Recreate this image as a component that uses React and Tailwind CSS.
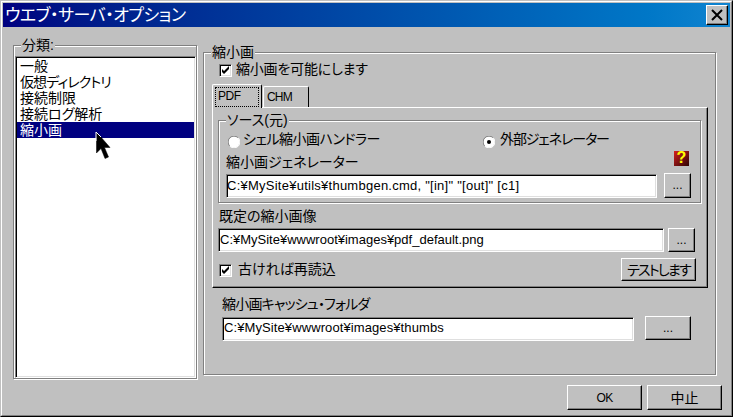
import React from "react";

const raised = "bg-[#c0c0c0] border border-white border-r-black border-b-black shadow-[inset_-1px_-1px_0_#808080]";
const etched = "relative border border-[#808080] shadow-[inset_1px_1px_0_#fff,1px_1px_0_#fff]";

function Btn({ className, children }) {
  return <div className={"flex items-center justify-center leading-none whitespace-nowrap text-black " + raised + " " + className}>{children}</div>;
}

function Dots() {
  return <span className="text-[12px] leading-none pb-[1px]">...</span>;
}

function Check({ className }) {
  return (
    <div className={"w-[13px] h-[13px] bg-white border border-[#808080] border-r-white border-b-white shadow-[inset_1px_1px_0_#000,inset_-1px_-1px_0_#dfdfdf] flex items-center justify-center shrink-0 " + (className || "")}>
      <svg width="9" height="9" viewBox="0 0 9 9"><path d="M1 3 L3 5 L8 0 V3 L3 8 L1 6 Z" fill="#000" /></svg>
    </div>
  );
}

function Radio({ on }) {
  return (
    <svg width="12" height="12" viewBox="0 0 12 12" className="shrink-0">
      <circle cx="6" cy="6" r="5.5" fill="#fff" />
      <path d="M1.8 10.2A5.9 5.9 0 0 1 10.2 1.8" fill="none" stroke="#808080" strokeWidth="1" />
      <path d="M10.2 1.8A5.9 5.9 0 0 1 1.8 10.2" fill="none" stroke="#fff" strokeWidth="1" />
      {on && <circle cx="6" cy="6" r="2" fill="#000" />}
    </svg>
  );
}

function Input({ className, children }) {
  return (
    <div className={"bg-white border border-[#808080] border-r-white border-b-white shadow-[inset_1px_1px_0_#000,inset_-1px_-1px_0_#dfdfdf] flex items-center text-[13px] leading-none text-black whitespace-nowrap " + className}>
      {children}
    </div>
  );
}

function Legend({ className, children }) {
  return <div className={"absolute bg-[#c0c0c0] px-px text-[14px] leading-[16px] text-black whitespace-nowrap " + className}>{children}</div>;
}

const items = [
  ["一般", ""],
  ["仮想ディレクトリ", "tracking-[-0.9px]"],
  ["接続制限", ""],
  ["接続ログ解析", ""],
  ["縮小画", ""],
];

export default function App() {
  return (
    <div className="relative w-[733px] h-[417px] overflow-hidden bg-[#c0c0c0] border border-[#c0c0c0] border-r-black border-b-black font-['Liberation_Sans','Noto_Sans_CJK_JP',sans-serif] [font-feature-settings:'palt']">
      <div className="h-full border border-white border-r-[#808080] border-b-[#808080] p-px flex flex-col">
        <div className="h-[24px] shrink-0 bg-gradient-to-r from-[#000080] to-[#1084d0] flex items-center justify-between pl-[2px] pr-[2px]">
          <span className="text-white text-[17px] leading-none tracking-[-0.5px]">ウエブ・サーバ・オプション</span>
          <div className={"w-[22px] h-[20px] flex items-center justify-center " + raised}>
            <svg width="12" height="12" viewBox="0 0 12 12"><path d="M1 1 L11 11 M11 1 L1 11" stroke="#000" strokeWidth="2" /></svg>
          </div>
        </div>

        <div className="flex items-start">
          <div className={etched + " w-[184px] h-[334px] ml-[10px] mt-[18px] pl-[1px] pt-[10px] shrink-0"}>
            <Legend className="left-[7px] -top-[9px]">分類:</Legend>
            <div className="h-full bg-white border border-[#808080] border-r-white border-b-white shadow-[inset_1px_1px_0_#000,inset_-1px_-1px_0_#dfdfdf] pt-[1px] pl-px pr-px">
              {items.map(([t, c], i) => (
                <div key={t} className={"h-[16px] pl-[3px] text-[14px] leading-[16px] " + c + " " + (i === 4 ? "bg-[#000080] text-white" : "text-black")}>{t}</div>
              ))}
            </div>
          </div>

          <div className={etched + " w-[513px] h-[323px] ml-[6px] mt-[25px] shrink-0"}>
            <Legend className="left-[7px] -top-[9px]">縮小画</Legend>
            <div className="flex items-center h-[13px] mt-[11px] ml-[15px] gap-[4px]">
              <Check />
              <span className="text-[14px] leading-none text-black pb-[4px] tracking-[-0.2px]">縮小画を可能にします</span>
            </div>

            <div className="flex items-end h-[24px] mt-[6px] ml-[8px] relative z-10">
              <div className="w-[50px] h-[24px] -mb-px bg-[#c0c0c0] border border-white border-b-0 border-r-black rounded-t-[2px] p-[2px] pb-[1px]">
                <div className="h-full border border-dotted border-black flex items-center pl-[2px] pb-[3px] text-[12px] tracking-[-0.5px] leading-none text-black">PDF</div>
              </div>
              <div className="w-[46px] h-[21px] ml-px bg-[#c0c0c0] border border-white border-b-0 border-r-black rounded-t-[2px] flex items-center pl-[3px] text-[12px] tracking-[-0.8px] leading-none text-black">CHM</div>
            </div>

            <div className="w-[496px] h-[181px] ml-[8px] border border-white border-r-black border-b-black shadow-[inset_-1px_-1px_0_#808080] px-[5px] pt-[12px]">
              <div className={etched + " w-[483px] h-[83px]"}>
                <Legend className="left-[7px] -top-[9px]">ソース(元)</Legend>
                <div className="flex items-center h-[12px] mt-[15px] ml-[9px]">
                  <Radio />
                  <span className="text-[14px] leading-none text-black ml-[3px] w-[240px] pb-[6px] tracking-[-0.5px]">シェル縮小画ハンドラー</span>
                  <Radio on />
                  <span className="text-[14px] leading-none text-black ml-[5px] pb-[6px] tracking-[-1.1px]">外部ジェネレーター</span>
                </div>
                <div className="flex items-center justify-between h-[16px] mt-[6px] ml-[7px] pr-[11px]">
                  <span className="text-[14px] leading-none text-black">縮小画ジェネレーター</span>
                  <div className="w-[15px] h-[15px] -mt-[8px] bg-gradient-to-br from-[#d82020] to-[#300505] flex items-center justify-center text-[16px] font-bold leading-none text-[#ffff00]">?</div>
                </div>
                <div className="flex items-start mt-[3px] ml-[7px]">
                  <Input className="w-[431px] h-[24px] mt-px pb-[2px] tracking-[0.25px]">C:¥MySite¥utils¥thumbgen.cmd, "[in]" "[out]" [c1]</Input>
                  <Btn className="w-[27px] h-[25px] ml-[7px]"><Dots /></Btn>
                </div>
              </div>

              <div className="text-[14px] leading-none text-black mt-[6px] ml-[1px] h-[14px]">既定の縮小画像</div>
              <div className="flex items-start mt-[5px]">
                <Input className="w-[446px] h-[24px] pl-px pb-[2px]">C:¥MySite¥wwwroot¥images¥pdf_default.png</Input>
                <Btn className="w-[27px] h-[24px] ml-[4px]"><Dots /></Btn>
              </div>
              <div className="flex items-start justify-between h-[23px] mt-[6px]">
                <div className="flex items-center gap-[6px] ml-[1px] mt-[6px] h-[13px]">
                  <Check />
                  <span className="text-[14px] leading-none text-black pb-[4px]">古ければ再読込</span>
                </div>
                <Btn className="w-[75px] h-[23px] mr-[6px] text-[14px] tracking-[-1.8px]">テストします</Btn>
              </div>
            </div>

            <div className="text-[14px] leading-none text-black mt-[9px] ml-[18px] h-[14px] tracking-[-0.8px]">縮小画キャッシュ・フォルダ</div>
            <div className="flex items-start mt-[5px] ml-[18px]">
              <Input className="w-[412px] h-[24px] mt-px pl-px pb-[3px] tracking-[0.1px]">C:¥MySite¥wwwroot¥images¥thumbs</Input>
              <Btn className="w-[46px] h-[24px] ml-[11px]"><Dots /></Btn>
            </div>
          </div>
        </div>

        <div className="flex justify-end gap-[5px] mt-[6px] pr-[8px]">
          <Btn className="w-[75px] h-[25px] text-[12px] tracking-[-0.6px]">OK</Btn>
          <Btn className="w-[75px] h-[25px] text-[14px]">中止</Btn>
        </div>
      </div>

      <svg width="16" height="30" viewBox="0 0 16 30" className="absolute left-[94px] top-[130px]">
        <path d="M1.5 1 L1.5 22 L6 17.5 L10 27.5 L13.5 26 L9.5 16.5 L15 16.5 Z" fill="#000" stroke="#000" strokeWidth="0.5" />
        <path d="M1 1 V10 M1 1 L6 6" stroke="#fff" strokeWidth="1" fill="none" />
      </svg>
    </div>
  );
}
